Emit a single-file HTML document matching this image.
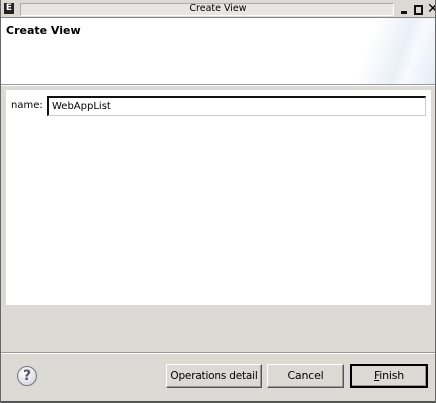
<!DOCTYPE html>
<html><head><style>
body{margin:0;width:436px;height:403px;overflow:hidden;background:#dcdad5;font-family:"DejaVu Sans","Liberation Sans",sans-serif;position:relative}
.abs{position:absolute}
.btn{position:absolute;top:364px;height:24px;background:#dcdad5;border:1px solid #fff;border-right-color:#555;border-bottom-color:#555;box-shadow:inset -1px -1px 0 #999;font-size:11px;text-align:center;line-height:22px;color:#000;box-sizing:border-box;white-space:nowrap;letter-spacing:-0.2px}
</style></head><body>
<div class="abs" style="left:0;top:0;width:436px;height:17px;background:#dcdad5;border-bottom:1px solid #888"></div>
<div class="abs" style="left:4px;top:3px;width:10px;height:11px;background:#222;color:#fff;font-size:9px;font-weight:bold;line-height:11px;text-align:center">E</div>
<div class="abs" style="left:20px;top:3px;width:372px;height:11px;border:1px solid #aaa;border-right-color:#fff;border-bottom-color:#fff;background:#e8e6e2"></div>
<div class="abs" style="left:0;top:2px;width:436px;text-align:center;font-size:9.5px;line-height:13px">Create View</div>
<div class="abs" style="left:401px;top:11px;width:6px;height:3px;background:#111"></div>
<div class="abs" style="left:414px;top:5px;width:5px;height:6px;border:2px solid #111"></div>
<div class="abs" style="left:427px;top:1px;font-size:14px;font-weight:bold;line-height:16px">✕</div>
<div class="abs" style="left:0;top:18px;width:436px;height:66px;background:linear-gradient(110deg,#fff 0%,#fff 82%,#eaf0f8 90%,#f8fafd 93%,#e3ebf6 100%);border-bottom:1px solid #999"></div>
<div class="abs" style="left:6px;top:24px;font-size:11px;font-weight:bold">Create View</div>
<div class="abs" style="left:0;top:85px;width:436px;height:1px;background:#fff"></div>
<div class="abs" style="left:6px;top:90px;width:425px;height:215px;background:#fff"></div>
<div class="abs" style="left:11px;top:100px;font-size:10px">name:</div>
<div class="abs" style="left:47px;top:96px;width:379px;height:20px;box-sizing:border-box;border:1px solid #ccc;border-top:2px solid #111;border-left:2px solid #111;background:#fff;font-size:10px;line-height:17px;padding-left:3px">WebAppList</div>
<div class="abs" style="left:0;top:352px;width:436px;height:1px;background:#999"></div>
<div class="abs" style="left:0;top:353px;width:436px;height:1px;background:#fff"></div>
<div class="abs" style="left:17px;top:366px;width:18px;height:18px;border-radius:50%;border:1px solid #777;background:radial-gradient(circle at 40% 35%,#fff,#c8cdd8);font-size:14px;font-weight:bold;color:#556;text-align:center;line-height:18px">?</div>
<div class="btn" style="left:166px;width:96px;font-size:10.5px">Operations detail</div>
<div class="btn" style="left:267px;width:77px">Cancel</div>
<div class="btn" style="left:350px;width:78px;border:2px solid #000;line-height:20px"><u>F</u>inish</div>
<div class="abs" style="left:0;top:401px;width:436px;height:2px;background:#555"></div>
<div class="abs" style="left:0;top:0;width:1px;height:403px;background:#666"></div>
<div class="abs" style="left:435px;top:0;width:1px;height:403px;background:#666"></div>
</body></html>
